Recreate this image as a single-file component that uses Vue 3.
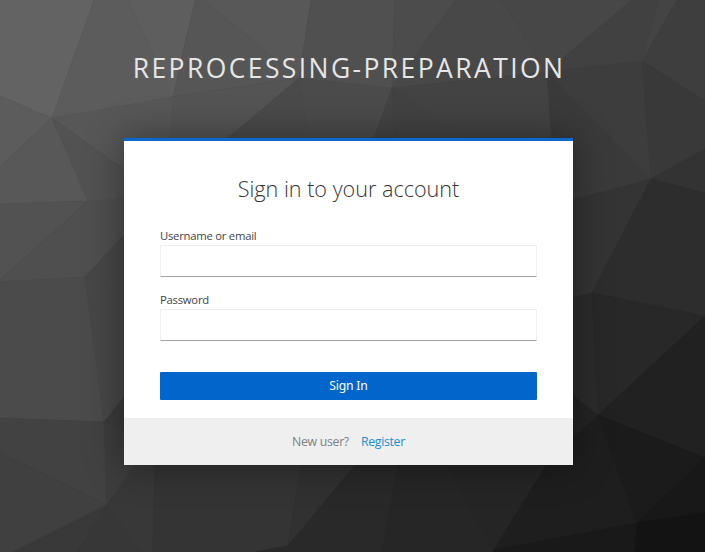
<script setup>
import { ref } from 'vue'

const username = ref('')
const password = ref('')

// Low-poly backdrop: [points, shade]
const facets = [
  ['0,0 94,0 52,118 0,96', '#636363'],
  ['94,0 128,0 173,97 52,118', '#5c5c5c'],
  ['128,0 195,0 173,97', '#5e5e5e'],
  ['195,0 203,0 299,78 173,97', '#565656'],
  ['203,0 311,0 299,78', '#585858'],
  ['311,0 395,0 392,88 299,78', '#505050'],
  ['395,0 456,0 392,88', '#4c4c4c'],
  ['456,0 502,0 547,72 392,88', '#484848'],
  ['502,0 632,0 547,72', '#474747'],
  ['632,0 659,0 642,61 547,72', '#414141'],
  ['659,0 677,0 642,61', '#444444'],
  ['677,0 705,0 705,101 642,61', '#3e3e3e'],
  ['0,96 52,118 0,167', '#5c5c5c'],
  ['0,167 52,118 88,201 0,204', '#585858'],
  ['52,118 173,97 167,200', '#575757'],
  ['52,118 167,200 88,201', '#525252'],
  ['173,97 299,78 167,190', '#545454'],
  ['299,78 318,190 167,190', '#4a4a4a'],
  ['299,78 392,88 348,210 318,190', '#4b4b4b'],
  ['392,88 397,200 348,210', '#444444'],
  ['392,88 547,190 397,200', '#424242'],
  ['392,88 547,72 556,200', '#434343'],
  ['547,72 651,179 556,205', '#3a3a3a'],
  ['547,72 642,61 651,179', '#3d3d3d'],
  ['642,61 705,101 705,149 651,179', '#393939'],
  ['651,179 705,149 705,193', '#333333'],
  ['0,204 88,201 0,280', '#525252'],
  ['88,201 140,197 140,218 85,277 0,282 0,280', '#4f4f4f'],
  ['85,277 140,218 140,304', '#474747'],
  ['0,282 85,277 104,422 0,418', '#4b4b4b'],
  ['85,277 140,304 140,378 104,422', '#474747'],
  ['104,422 140,378 140,434', '#3b3b3b'],
  ['0,418 104,422 107,505 0,453', '#424242'],
  ['104,422 140,434 140,459 107,505', '#3d3d3d'],
  ['0,453 107,505 13,552 0,552', '#404040'],
  ['107,505 77,552 13,552', '#393939'],
  ['107,505 140,552 77,552', '#373737'],
  ['107,505 156,435 153,552 140,552', '#383838'],
  ['156,435 306,435 288,546 255,552 153,552', '#343434'],
  ['306,435 380,435 288,546', '#313131'],
  ['288,546 380,435 404,435 382,552 255,552', '#292929'],
  ['404,435 430,435 494,550 493,552 382,552', '#262626'],
  ['430,435 565,435 494,550', '#252525'],
  ['565,435 637,523 494,550', '#1e1e1e'],
  ['550,435 598,415 637,523', '#1e1e1e'],
  ['556,204 651,179 592,293 560,300', '#343434'],
  ['651,179 705,193 705,316 592,293', '#2d2d2d'],
  ['592,293 598,415 560,386 560,300', '#2c2c2c'],
  ['592,293 705,316 598,415', '#282828'],
  ['560,386 598,415 560,449', '#242424'],
  ['598,415 705,316 705,458', '#212121'],
  ['598,415 705,458 637,523', '#1b1b1b'],
  ['637,523 705,458 705,513', '#181818'],
  ['637,523 705,513 705,552 634,552', '#131313'],
  ['494,550 637,523 634,552 493,552', '#191919'],
]
</script>

<template>
  <div class="page">
    <svg class="backdrop" viewBox="0 0 705 552" preserveAspectRatio="none" aria-hidden="true">
      <polygon
        v-for="([points, shade], i) in facets"
        :key="i"
        :points="points"
        :fill="shade"
        :stroke="shade"
        stroke-width="0.6"
      />
    </svg>

    <header class="realm">REPROCESSING-PREPARATION</header>

    <main class="card">
      <h1 class="title">Sign in to your account</h1>
      <form class="form" @submit.prevent>
        <label class="label" for="username">Username or email</label>
        <input id="username" v-model="username" class="input" type="text" />
        <label class="label second" for="password">Password</label>
        <input id="password" v-model="password" class="input" type="password" />
        <button class="submit" type="submit">Sign In</button>
      </form>
      <footer class="info">
        <span>New user?</span>
        <a class="link" href="#">Register</a>
      </footer>
    </main>
  </div>
</template>

<style>
body {
  margin: 0;
  background: #333;
}
</style>

<style scoped>
.page {
  position: relative;
  display: flex;
  flex-direction: column;
  align-items: center;
  box-sizing: border-box;
  height: 552px;
  padding-right: 8px;
  overflow: hidden;
  background: #333;
  font-family: "Open Sans", "Noto Sans", sans-serif;
}

.backdrop {
  position: absolute;
  inset: 0;
  width: 100%;
  height: 100%;
}

.realm {
  position: relative;
  margin-top: 51px;
  height: 36px;
  line-height: 35px;
  padding-left: 1px;
  font-size: 26.5px;
  font-weight: 400;
  letter-spacing: 2.4px;
  color: #e6e6e6;
  white-space: nowrap;
}

.card {
  position: relative;
  display: flex;
  flex-direction: column;
  box-sizing: border-box;
  width: 449px;
  height: 326.5px;
  margin-top: 51px;
  border-top: 3px solid #0b68cd;
  background: #fff;
  box-shadow: 0 0 36px rgba(3, 3, 3, 0.4);
}

.title {
  margin: 32px 0 0;
  height: 32px;
  line-height: 32px;
  text-align: center;
  font-size: 21.6px;
  font-weight: 300;
  color: #363636;
}

.form {
  display: flex;
  flex-direction: column;
  margin: 23px 36px 18px;
}

.label {
  height: 15px;
  line-height: 15px;
  margin-bottom: 2px;
  font-size: 11.3px;
  letter-spacing: -0.25px;
  color: #444;
}

.label.second {
  margin-top: 15px;
}

.input {
  box-sizing: border-box;
  width: 377px;
  height: 32px;
  padding: 0 8px;
  border: 1px solid #f0f0f0;
  border-bottom-color: #a5a5a5;
  border-radius: 0;
  background: #fff;
  font: inherit;
  font-size: 14px;
  outline: none;
}

.submit {
  height: 28px;
  margin-top: 31px;
  padding: 0 0 2px;
  border: 0;
  border-radius: 1px;
  background: #06c;
  color: #fff;
  font-family: "Noto Sans", sans-serif;
  font-size: 12.2px;
  letter-spacing: -0.2px;
}

.info {
  display: flex;
  flex: 1;
  align-items: center;
  justify-content: center;
  gap: 12px;
  background: #efefef;
  color: #7d8185;
  font-size: 12.3px;
  letter-spacing: -0.3px;
}

.link {
  color: #1590d0;
  text-decoration: none;
}
</style>
